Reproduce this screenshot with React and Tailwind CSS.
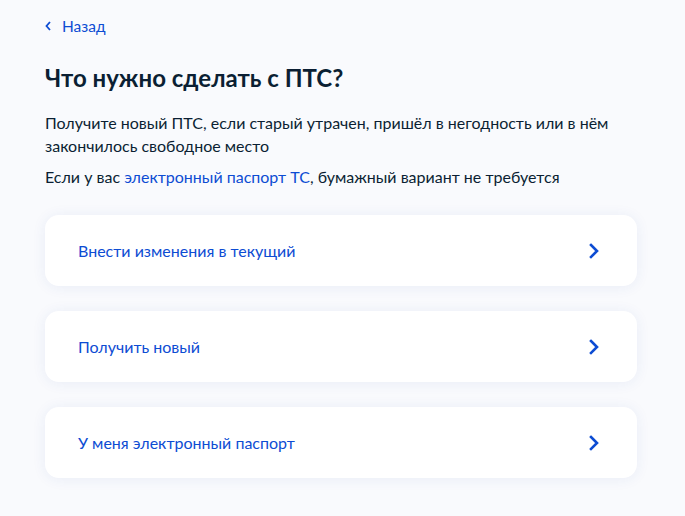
import React from 'react';

const options = ['Внести изменения в текущий', 'Получить новый', 'У меня электронный паспорт'];

const Chevron = ({ className }) => (
  <svg viewBox="0 0 10 16" className={className} fill="none">
    <path d="M2 2l6 6-6 6" stroke="currentColor" strokeWidth="2.6" strokeLinecap="square" strokeLinejoin="miter" />
  </svg>
);

export default function App() {
  return (
    <div className="min-h-[516px] bg-[#f9fafd] px-[45px] pt-[17px] pb-10 font-['Lato',sans-serif] text-[#0b1f33]">
      <a className="flex items-center gap-[11px] text-[15.5px] leading-[18px] text-[#0d4cd3]">
        <svg viewBox="0 0 6 10" className="w-[6px] h-[10px]" fill="none">
          <path d="M5 1L1.5 5 5 9" stroke="currentColor" strokeWidth="1.8" />
        </svg>
        Назад
      </a>
      <h1 className="mt-[27px] text-[24px] leading-[32px] font-bold">Что нужно сделать с ПТС?</h1>
      <p className="mt-[17px] text-[16px] leading-[23px] pr-6">
        Получите новый ПТС, если старый утрачен, пришёл в негодность или в нём закончилось свободное место
      </p>
      <p className="mt-[8px] text-[16px] leading-[23px]">
        Если у вас <span className="text-[#0d4cd3]">электронный паспорт ТС</span>, бумажный вариант не требуется
      </p>
      <div className="mt-[27px] flex flex-col gap-[25px] w-[592px]">
        {options.map((o) => (
          <div key={o} className="h-[71px] rounded-[14px] bg-white shadow-[0_1px_14px_rgba(40,80,160,0.08)] flex items-center justify-between pl-[33px] pr-[38px]">
            <span className="text-[16px] text-[#0d4cd3]">{o}</span>
            <Chevron className="w-[10px] h-[16px] text-[#0d4cd3]" />
          </div>
        ))}
      </div>
    </div>
  );
}
